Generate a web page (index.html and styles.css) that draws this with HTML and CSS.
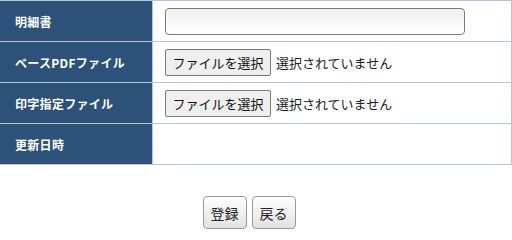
FILE: index.html
```html
<!DOCTYPE html>
<html lang="ja">
<head>
<meta charset="utf-8">
<link rel="stylesheet" href="styles.css">
</head>
<body>
<table class="form">
  <tr>
    <th>明細書</th>
    <td><input class="text" type="text"></td>
  </tr>
  <tr>
    <th>ベースPDFファイル</th>
    <td><span class="file"><span class="filebtn">ファイルを選択</span><span class="filetxt">選択されていません</span></span></td>
  </tr>
  <tr>
    <th>印字指定ファイル</th>
    <td><span class="file"><span class="filebtn">ファイルを選択</span><span class="filetxt">選択されていません</span></span></td>
  </tr>
  <tr>
    <th>更新日時</th>
    <td></td>
  </tr>
</table>
<div class="actions">
  <button class="btn" type="button">登録</button>
  <button class="btn" type="button">戻る</button>
</div>
</body>
</html>
```
FILE: styles.css
```css
html, body {
  margin: 0;
  padding: 0;
  background: #ffffff;
  font-family: "Noto Sans CJK JP", "Noto Sans", sans-serif;
}
.form {
  border-collapse: collapse;
  width: 512px;
  table-layout: fixed;
}
.form th, .form td {
  border: 1px solid #b9c6d2;
  height: 41px;
  padding: 0;
  box-sizing: border-box;
}
.form th {
  width: 152px;
  background: #2c5279;
  color: #ffffff;
  font-size: 12px;
  font-weight: bold;
  text-align: left;
  padding-left: 14px;
  border-left-color: #2c5279;
  letter-spacing: 0.3px;
}
.form td {
  padding-left: 12px;
}
.text {
  display: block;
  width: 300px;
  height: 27px;
  box-sizing: border-box;
  border: 1px solid #7a7a7a;
  border-radius: 4px;
  background: linear-gradient(#f0f0f0, #ffffff);
  margin: 0;
}
.file {
  display: flex;
  align-items: center;
  font-size: 13px;
  color: #222;
}
.filebtn {
  display: flex;
  align-items: center;
  justify-content: center;
  width: 106px;
  height: 27px;
  box-sizing: border-box;
  border: 1px solid #7a7a7a;
  border-radius: 2px;
  background: #efefef;
  color: #111;
}
.filetxt {
  margin-left: 5px;
}
.actions {
  display: flex;
  justify-content: center;
  gap: 5px;
  margin-top: 31px;
  padding-right: 14px;
}
.btn {
  width: 44px;
  height: 33px;
  box-sizing: border-box;
  border: 1px solid #9a9a9a;
  border-radius: 4px;
  background: linear-gradient(#ffffff, #e2e2e2);
  font-family: "Noto Sans CJK JP", sans-serif;
  font-size: 14px;
  color: #222;
  padding: 0;
}
```
